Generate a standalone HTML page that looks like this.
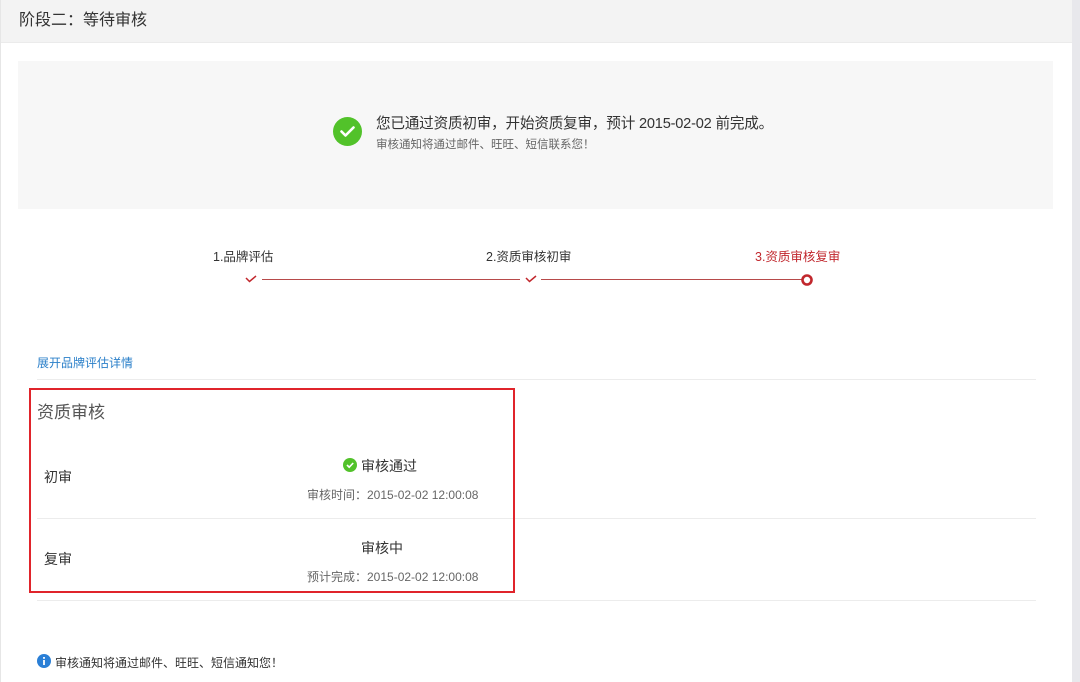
<!DOCTYPE html>
<html><head><meta charset="utf-8"><style>
*{margin:0;padding:0;box-sizing:border-box}
body{width:1080px;height:682px;background:#fff;font-family:"Liberation Sans","Noto Sans CJK SC",sans-serif;position:relative;overflow:hidden;color:#333}
.a{position:absolute;white-space:nowrap}
</style></head><body>
<div class="a" style="left:0;top:0;width:1072px;height:43px;background:#f3f3f3;border-bottom:1px solid #ebebeb"></div>
<div class="a" style="left:0;top:0;width:1px;height:682px;background:#e6e6e6"></div>
<div class="a" style="left:1072px;top:0;width:8px;height:682px;background:#e8e8ec"></div>
<div class="a" style="left:19px;top:10px;font-size:16px;color:#333;line-height:22px">阶段二：等待审核</div>
<div class="a" style="left:18px;top:61px;width:1035px;height:148px;background:#f7f7f7"></div>
<svg class="a" style="left:333px;top:117px" width="29" height="29" viewBox="0 0 29 29"><circle cx="14.5" cy="14.5" r="14.5" fill="#52c22a"/><path d="M8.5 14.5l4 4 8-8" stroke="#fff" stroke-width="2.6" fill="none" stroke-linecap="round" stroke-linejoin="round"/></svg>
<div class="a" style="left:376px;top:114px;font-size:14.6px;color:#333;line-height:20px;letter-spacing:-0.2px">您已通过资质初审，开始资质复审，预计 2015-02-02 前完成。</div>
<div class="a" style="left:376px;top:137px;font-size:11.5px;color:#666;line-height:16px">审核通知将通过邮件、旺旺、短信联系您！</div>
<div class="a" style="left:213px;top:246px;font-size:12.5px;color:#333">1.品牌评估</div>
<div class="a" style="left:486px;top:246px;font-size:12.5px;color:#333">2.资质审核初审</div>
<div class="a" style="left:755px;top:246px;font-size:12.5px;color:#c1272d">3.资质审核复审</div>
<div class="a" style="left:262px;top:279px;width:258px;height:1px;background:#b74a4a"></div>
<div class="a" style="left:541px;top:279px;width:262px;height:1px;background:#b74a4a"></div>
<svg class="a" style="left:244px;top:274px" width="14" height="10"><path d="M2 4l3.5 3.5L12 2" stroke="#c1272d" stroke-width="1.5" fill="none"/></svg>
<svg class="a" style="left:524px;top:274px" width="14" height="10"><path d="M2 4l3.5 3.5L12 2" stroke="#c1272d" stroke-width="1.5" fill="none"/></svg>
<svg class="a" style="left:800px;top:273px" width="14" height="14"><circle cx="7" cy="7" r="4.5" stroke="#c1272d" stroke-width="2.6" fill="#fff"/></svg>
<div class="a" style="left:37px;top:354px;font-size:12px;color:#2a7fc9">展开品牌评估详情</div>
<div class="a" style="left:37px;top:379px;width:999px;height:1px;background:#ececec"></div>
<div class="a" style="left:37px;top:518px;width:999px;height:1px;background:#ececec"></div>
<div class="a" style="left:37px;top:600px;width:999px;height:1px;background:#ececec"></div>
<div class="a" style="left:29px;top:388px;width:486px;height:205px;border:2px solid #e0242b"></div>
<div class="a" style="left:37px;top:398px;font-size:17px;color:#555">资质审核</div>
<div class="a" style="left:44px;top:467px;font-size:14px;color:#333">初审</div>
<div class="a" style="left:44px;top:549px;font-size:14px;color:#333">复审</div>
<svg class="a" style="left:343px;top:458px" width="14" height="14"><circle cx="7" cy="7" r="7" fill="#52c22a"/><path d="M4 7l2.2 2.2L10.2 5" stroke="#fff" stroke-width="1.6" fill="none"/></svg>
<div class="a" style="left:361px;top:456px;font-size:14px;color:#333">审核通过</div>
<div class="a" style="left:307px;top:486px;font-size:12px;color:#666">审核时间：2015-02-02 12:00:08</div>
<div class="a" style="left:361px;top:538px;font-size:14px;color:#333">审核中</div>
<div class="a" style="left:307px;top:568px;font-size:12px;color:#666">预计完成：2015-02-02 12:00:08</div>
<svg class="a" style="left:37px;top:654px" width="14" height="14"><circle cx="7" cy="7" r="7" fill="#2a7fd6"/><rect x="6.1" y="6" width="1.8" height="5" fill="#fff"/><rect x="6.1" y="3" width="1.8" height="1.8" fill="#fff"/></svg>
<div class="a" style="left:55px;top:654px;font-size:12px;color:#333">审核通知将通过邮件、旺旺、短信通知您！</div>
</body></html>
